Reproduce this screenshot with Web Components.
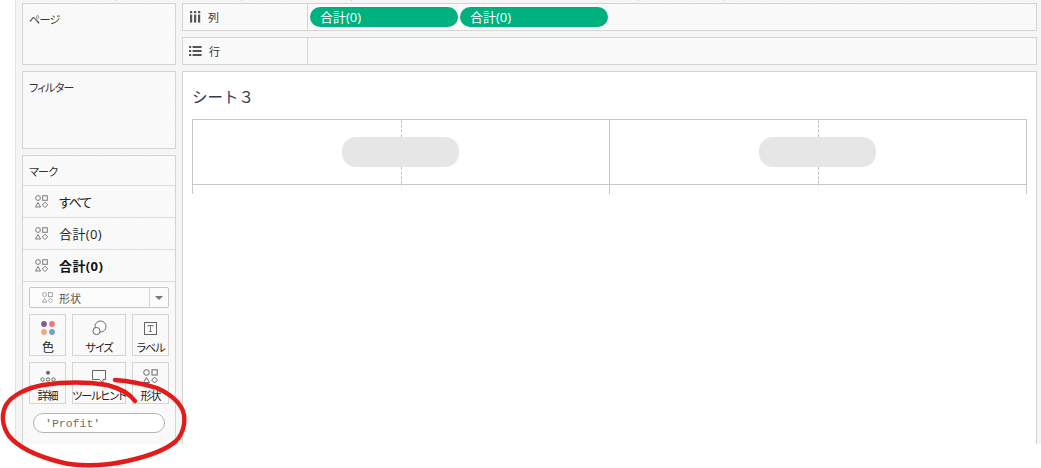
<!doctype html>
<html lang="ja">
<head>
<meta charset="utf-8">
<title>シート 3</title>
<style>
  html, body { margin: 0; background: #fff; }
  body {
    width: 1041px;
    height: 468px;
    overflow: hidden;
    font-family: "Open Sans", "Noto Sans CJK JP", sans-serif;
    color: #333;
    position: relative;
  }
</style>
</head>
<body>
<app-shell>
  <side-panel slot="side" label="ページ" style="height:62px"></side-panel>
  <side-panel slot="side" label="フィルター" style="height:78px"></side-panel>
  <marks-card slot="side">
    <mark-row style="letter-spacing:-1.3px">すべて</mark-row>
    <mark-row>合計(0)</mark-row>
    <mark-row bold>合計(0)</mark-row>
  </marks-card>

  <shelf-row slot="main" icon="columns" label="列">
    <green-pill>合計(0)</green-pill>
    <green-pill>合計(0)</green-pill>
  </shelf-row>
  <shelf-row slot="main" icon="rows" label="行"></shelf-row>
  <view-sheet slot="main" title-text="シート３"></view-sheet>
</app-shell>
<ink-circle></ink-circle>

<script>
  const panelTexture = `
    background-color: #f9f9f9;
    background-image: conic-gradient(#f8f8f8 25%, #fbfbfb 0 50%, #f8f8f8 0 75%, #fbfbfb 0);
    background-size: 3px 3px;`;

  const tick = (x) => `linear-gradient(#cfcfcf, #cfcfcf) ${x - 16}px 0 / 1px 1px no-repeat`;

  class AppShell extends HTMLElement {
    constructor() {
      super();
      this.attachShadow({ mode: "open" });
      this.shadowRoot.innerHTML = `
  <style>
:host {
	display: grid;
	grid-template-columns: 154px 855px;
	column-gap: 6px;
	box-sizing: border-box;
	height: 444px;
	margin-left: 15px;
	padding: 3px 0 0 6px;
	background: ${[115, 241, 351, 638, 724].map(tick).join(", ")}, #f5f5f5;
	border-left: 1px solid #e2e2e2;
}
.col {
	display: flex;
	flex-direction: column;
	gap: 6px;
	min-height: 0;
}
  </style>
  <div class="col"><slot name="side"></slot></div>
  <div class="col"><slot name="main"></slot></div>`;
    }
  }

  class SidePanel extends HTMLElement {
    constructor() {
      super();
      this.attachShadow({ mode: "open" });
    }
    connectedCallback() {
      this.shadowRoot.innerHTML = `
  <style>
:host {
	display: block;
	box-sizing: border-box;
	flex: none;
	border: 1px solid #d4d4d4;
	padding: 8px 6px;
	font-size: 11px;
	letter-spacing: -.7px;
	line-height: 16px;
	font-feature-settings: "palt" 1;
	${panelTexture}
}
  </style>
  ${this.getAttribute("label")}`;
    }
  }

  class MarkGlyph extends HTMLElement {
    constructor() {
      super();
      this.attachShadow({ mode: "open" });
      const size = this.getAttribute("size") || 13;
      const color = this.getAttribute("color") || "#7a7a7a";
      this.shadowRoot.innerHTML = `
  <style>
:host { display: inline-flex; flex: none; }
  </style>
  <svg width="${size}" height="${size}" viewBox="0 0 13 13" fill="none" stroke="${color}" stroke-width="1">
    <circle cx="3" cy="3" r="2.4"/>
    <rect x="7.7" y=".7" width="4.6" height="4.6"/>
    <path d="M3 7.6 5.6 12H.4Z"/>
    <path d="M10 7.2 12.7 9.9 10 12.6 7.3 9.9Z"/>
  </svg>`;
    }
  }

  class MarkRow extends HTMLElement {
    constructor() {
      super();
      this.attachShadow({ mode: "open" });
      this.shadowRoot.innerHTML = `
  <style>
:host {
	display: flex;
	align-items: center;
	gap: 11px;
	box-sizing: border-box;
	height: 32px;
	padding-left: 12px;
	border-bottom: 1px solid #dcdcdc;
	font-size: 13px;
	letter-spacing: .4px;
	color: #222;
	font-feature-settings: "palt" 1;
}
:host([bold]) { font-weight: 700; color: #111; }
  </style>
  <mark-glyph></mark-glyph><span><slot></slot></span>`;
    }
  }

  class MarkButton extends HTMLElement {
    constructor() {
      super();
      this.attachShadow({ mode: "open" });
    }
    connectedCallback() {
      this.shadowRoot.innerHTML = `
  <style>
:host {
	display: flex;
	flex-direction: column;
	align-items: center;
	box-sizing: border-box;
	height: 42px;
	border: 1px solid #d4d4d4;
	font-size: 11px;
	letter-spacing: -1px;
	line-height: 14px;
	color: #222;
	white-space: nowrap;
	font-feature-settings: "palt" 1;
}
.ico { height: 22px; flex: none; display: flex; align-items: flex-end; }
span { margin-top: 4px; }
  </style>
  <div class="ico"><slot></slot></div>
  <span>${this.getAttribute("label")}</span>`;
    }
  }

  class MarksCard extends HTMLElement {
    constructor() {
      super();
      this.attachShadow({ mode: "open" });
      this.shadowRoot.innerHTML = `
  <style>
:host {
	display: block;
	box-sizing: border-box;
	flex: 1;
	border: 1px solid #d4d4d4;
	border-bottom: 0;
	${panelTexture}
}
.title {
	box-sizing: border-box;
	height: 30px;
	padding: 8px 6px 0;
	border-bottom: 1px solid #dcdcdc;
	font-size: 11px;
	letter-spacing: -.7px;
	line-height: 16px;
	font-feature-settings: "palt" 1;
}
.body { padding: 5px 6px 0; }
.select {
	display: flex;
	align-items: center;
	box-sizing: border-box;
	height: 21px;
	border: 1px solid #c8c8c8;
	border-radius: 2px;
	background: #fcfcfc;
	padding-left: 12px;
	gap: 6px;
	font-size: 11px;
	color: #555;
}
.select span { flex: 1; }
.caret {
	display: flex;
	align-items: center;
	justify-content: center;
	width: 18px;
	height: 100%;
	border-left: 1px solid #d4d4d4;
}
.caret i {
	border: 4px solid transparent;
	border-top: 4px solid #777;
	border-bottom: 0;
}
.buttons {
	display: grid;
	grid-template-columns: 37px 54px 37px;
	grid-auto-rows: 42px;
	gap: 6px;
	margin-top: 6px;
}
.field {
	box-sizing: border-box;
	width: 132px;
	height: 20px;
	margin: 9px 0 0 4px;
	border: 1px solid #b4b4b4;
	border-radius: 10px;
	background: #fff;
	padding-left: 11px;
	font: 11.5px/20px "Liberation Mono", monospace;
	color: #6f6f6f;
}
svg { display: block; }
  </style>
  <div class="title">マーク</div>
  <slot></slot>
  <div class="body">
    <div class="select">
      <mark-glyph size="11" color="#999"></mark-glyph>
      <span>形状</span>
      <div class="caret"><i></i></div>
    </div>
    <div class="buttons">
      <mark-button label="色" style="font-size:12px">
        <svg width="18" height="18" viewBox="0 0 18 18">
          <circle cx="5" cy="5" r="2.9" fill="#7d5f8e"/>
          <circle cx="13" cy="5" r="2.9" fill="#f0777b"/>
          <circle cx="5" cy="13" r="2.9" fill="#f2a877"/>
          <circle cx="13" cy="13" r="2.9" fill="#6f9fd0"/>
        </svg>
      </mark-button>
      <mark-button label="サイズ">
        <svg width="18" height="18" viewBox="0 0 18 18" fill="#fbfbfb" stroke="#666">
          <circle cx="10.5" cy="7.5" r="5.5"/>
          <circle cx="6.5" cy="12" r="3.6"/>
        </svg>
      </mark-button>
      <mark-button label="ラベル">
        <svg width="13" height="15" viewBox="0 0 13 15" fill="none" stroke="#666">
          <rect x=".5" y=".5" width="12" height="12"/>
          <path d="M4 4.5V3.5H9V4.5M6.5 3.5V9.5M5.2 9.5H7.8" stroke-width=".9"/>
        </svg>
      </mark-button>
      <mark-button label="詳細">
        <svg width="18" height="16" viewBox="0 0 18 16" fill="none" stroke="#666">
          <circle cx="9" cy="3.7" r="2" fill="#666" stroke="none"/>
          <circle cx="3.5" cy="10.5" r="1.7"/>
          <circle cx="9" cy="10.5" r="1.7"/>
          <circle cx="14.5" cy="10.5" r="1.7"/>
        </svg>
      </mark-button>
      <mark-button label="ツールヒント">
        <svg width="16" height="16" viewBox="0 0 16 16" fill="#fbfbfb" stroke="#666">
          <path d="M1.5 1.5H14.5V10.5H12V14L8.5 10.5H1.5Z"/>
        </svg>
      </mark-button>
      <mark-button label="形状">
        <svg width="15" height="16" viewBox="0 0 15 16" fill="none" stroke="#666">
          <circle cx="3.5" cy="3.5" r="2.8"/>
          <rect x="9" y=".8" width="5.2" height="5.2"/>
          <path d="M3.5 8.6 6.6 13.6H.4Z"/>
          <path d="M11.6 8.2 14.5 11.1 11.6 14 8.7 11.1Z"/>
        </svg>
      </mark-button>
    </div>
    <div class="field">'Profit'</div>
  </div>`;
    }
  }

  class ShelfRow extends HTMLElement {
    constructor() {
      super();
      this.attachShadow({ mode: "open" });
    }
    connectedCallback() {
      const icons = {
        columns: `<svg width="12" height="12" viewBox="0 0 12 12" fill="#555">
          <rect x="1" y="0" width="2.2" height="2.2"/><rect x="1" y="3.6" width="2.2" height="8"/>
          <rect x="5" y="0" width="2.2" height="2.2"/><rect x="5" y="3.6" width="2.2" height="8"/>
          <rect x="9" y="0" width="2.2" height="2.2"/><rect x="9" y="3.6" width="2.2" height="8"/>
        </svg>`,
        rows: `<svg width="13" height="12" viewBox="0 0 13 12" fill="#555">
          <rect x="0" y="1" width="2.2" height="2"/><rect x="3.6" y="1" width="9" height="2"/>
          <rect x="0" y="5" width="2.2" height="2"/><rect x="3.6" y="5" width="9" height="2"/>
          <rect x="0" y="9" width="2.2" height="2"/><rect x="3.6" y="9" width="9" height="2"/>
        </svg>`,
      };
      this.shadowRoot.innerHTML = `
  <style>
:host {
	display: flex;
	box-sizing: border-box;
	flex: none;
	height: 28px;
	border: 1px solid #d4d4d4;
	${panelTexture}
}
.head {
	display: flex;
	align-items: center;
	gap: 7px;
	box-sizing: border-box;
	width: 125px;
	flex: none;
	padding-left: 6px;
	border-right: 1px solid #d4d4d4;
	font-size: 11px;
	color: #333;
}
.pills {
	display: flex;
	align-items: center;
	gap: 2px;
	padding-left: 2px;
}
svg { display: block; }
  </style>
  <div class="head">${icons[this.getAttribute("icon")]}<span>${this.getAttribute("label")}</span></div>
  <div class="pills"><slot></slot></div>`;
    }
  }

  class GreenPill extends HTMLElement {
    constructor() {
      super();
      this.attachShadow({ mode: "open" });
      this.shadowRoot.innerHTML = `
  <style>
:host {
	display: flex;
	align-items: center;
	box-sizing: border-box;
	width: 148px;
	height: 20px;
	padding: 0 0 2px 10px;
	border-radius: 10px;
	background: #00b180;
	color: #fff;
	font-size: 13px;
}
  </style>
  <slot></slot>`;
    }
  }

  class ViewSheet extends HTMLElement {
    constructor() {
      super();
      this.attachShadow({ mode: "open" });
    }
    connectedCallback() {
      const pane = `
      <div class="pane">
        <i class="dash"></i><b class="bar"></b><i class="dash"></i>
      </div>`;
      const leg = `<div class="leg"><i></i></div>`;
      this.shadowRoot.innerHTML = `
  <style>
:host {
	display: block;
	box-sizing: border-box;
	flex: 1;
	border: 1px solid #d4d4d4;
	border-bottom: 0;
	background: #fff;
	padding: 0 9px;
}
h2 {
	margin: 0;
	height: 47px;
	box-sizing: border-box;
	padding-top: 13px;
	font-size: 15.5px;
	font-weight: 400;
	line-height: 24px;
	color: #2f3c55;
}
.table {
	display: grid;
	grid-template-columns: 417px 417px;
	width: 835px;
	border-left: 1px solid #c8c8c8;
	box-sizing: border-box;
}
.pane {
	display: flex;
	flex-direction: column;
	align-items: center;
	box-sizing: border-box;
	height: 66px;
	border-top: 1px solid #c8c8c8;
	border-bottom: 1px solid #c8c8c8;
	border-right: 1px solid #c8c8c8;
}
.dash {
	flex: 1;
	width: 0;
	border-left: 1px dashed #c4c4c4;
}
.bar {
	width: 117px;
	height: 30px;
	flex: none;
	margin-left: -1px;
	border-radius: 14px;
	background: #e6e6e6;
}
.leg {
	display: flex;
	justify-content: center;
	box-sizing: border-box;
	height: 9px;
	border-right: 1px solid #c8c8c8;
}
.leg i { width: 0; height: 5px; border-left: 1px solid #f0f0f0; }
  </style>
  <h2>${this.getAttribute("title-text")}</h2>
  <div class="table">${pane}${pane}${leg}${leg}</div>`;
    }
  }

  class InkCircle extends HTMLElement {
    constructor() {
      super();
      this.attachShadow({ mode: "open" });
      this.shadowRoot.innerHTML = `
  <style>
:host { position: absolute; left: 0; top: 0; width: 1041px; height: 468px; pointer-events: none; }
svg { display: block; }
  </style>
  <svg width="1041" height="468" viewBox="0 0 1041 468" fill="none" stroke="#e21b1b" stroke-linecap="round" stroke-linejoin="round">
    <path stroke-width="4.4" d="M135 401C129 393 119 388 107 385C88 382 63 382 43 385C27 388 12 395 6 405C1 414 2 426 9 436C18 447 33 455 60 462C75 466 100 467 127 461C145 457 165 451 176 441C184 433 186 420 183 411C179 401 170 394 157 388C144 384 130 381 115 380"/>
  </svg>`;
    }
  }

  customElements.define("app-shell", AppShell);
  customElements.define("side-panel", SidePanel);
  customElements.define("mark-glyph", MarkGlyph);
  customElements.define("mark-row", MarkRow);
  customElements.define("mark-button", MarkButton);
  customElements.define("marks-card", MarksCard);
  customElements.define("shelf-row", ShelfRow);
  customElements.define("green-pill", GreenPill);
  customElements.define("view-sheet", ViewSheet);
  customElements.define("ink-circle", InkCircle);
</script>
</body>
</html>
